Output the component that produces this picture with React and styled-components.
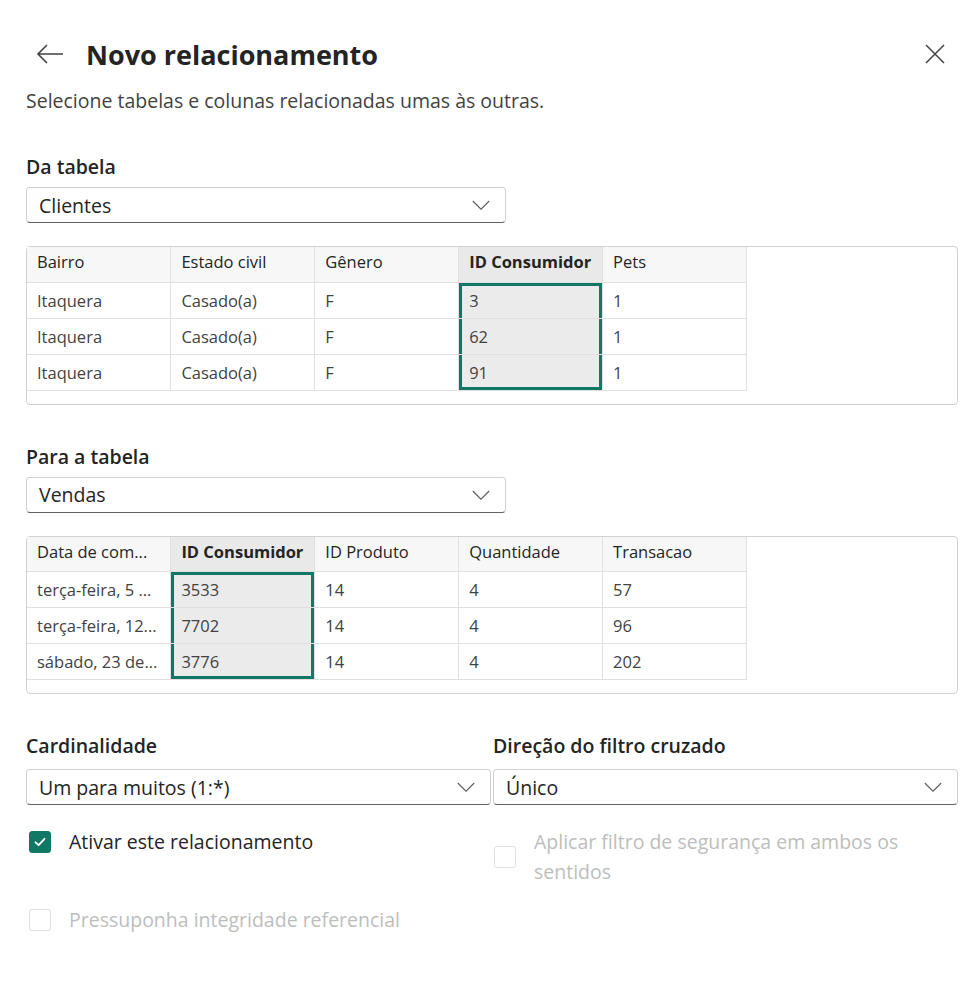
import React from "react"
import styled, { createGlobalStyle } from "styled-components"

const GREEN = "#117865"

const GlobalStyle = createGlobalStyle`
    body {
        margin: 0;
        background: #fff;
        font-family: "Open Sans", "Noto Sans", sans-serif;
        color: #242424;
    }
`

const Page = styled.div`
    width: 932px;
    padding: 32px 21px 40px 26px;
`
const Header = styled.div`
    height: 44px;
    display: flex;
    align-items: center;
`
const IconButton = styled.button`
    border: none;
    background: transparent;
    padding: 0;
    display: flex;
    align-items: center;
    justify-content: center;
    color: #424242;
    margin-left: ${p => p.$ml || "0px"};
    cursor: pointer;
`
const Title = styled.h1`
    margin: 0 0 0 22px;
    font-size: 27px;
    font-weight: 700;
    color: #242424;
    flex: 1;
`
const Subtitle = styled.p`
    margin: 12px 0 0;
    font-size: 19.5px;
    line-height: 26px;
    color: #424242;
`
const Label = styled.div`
    margin-top: ${p => p.$mt || "0px"};
    font-size: 19.5px;
    font-weight: 600;
    line-height: 24px;
    color: #242424;
`
const Select = styled.div`
    box-sizing: border-box;
    width: ${p => p.$width || "100%"};
    height: 36px;
    margin-top: ${p => p.$mt || "8px"};
    border: 1px solid #d1d1d1;
    border-bottom-color: #616161;
    border-radius: 4px;
    padding: 0 15px 0 12px;
    display: flex;
    align-items: center;
    justify-content: space-between;
    font-size: 19.5px;
    color: #242424;
`
const TableBox = styled.div`
    margin-top: 23px;
    border: 1px solid #d1d1d1;
    border-radius: 4px;
    padding-bottom: 13px;
`
const Table = styled.table`
    border-collapse: collapse;
    table-layout: fixed;
    width: 720px;
`
const HeadRow = styled.tr`
    height: 35px;
`
const BodyRow = styled.tr`
    height: 36px;
`
const Th = styled.th`
    text-align: left;
    font-weight: ${p => (p.$selected ? 700 : 400)};
    font-size: 16.5px;
    color: #242424;
    background: ${p => (p.$selected ? "#e9e9e9" : "#f7f7f7")};
    padding: 0 10px 5px;
    border-right: 1px solid #e0e0e0;
    border-bottom: 1px solid #e0e0e0;
    white-space: nowrap;
    overflow: hidden;
`
const Td = styled.td`
    font-size: 16.5px;
    color: #424242;
    padding: 0 10px;
    white-space: nowrap;
    overflow: hidden;
    border-right: 1px solid #e0e0e0;
    border-bottom: 1px solid #e0e0e0;
    background: ${p => (p.$selected ? "#ebebeb" : "#fff")};
    box-shadow: ${p =>
        p.$selected
            ? [
                  `inset 3px 0 0 ${GREEN}`,
                  `inset -3px 0 0 ${GREEN}`,
                  p.$first ? `inset 0 3px 0 ${GREEN}` : null,
                  p.$last ? `inset 0 -3px 0 ${GREEN}` : null,
              ]
                  .filter(Boolean)
                  .join(", ")
            : "none"};
`
const Grid = styled.div`
    margin-top: 40px;
    display: grid;
    grid-template-columns: 465px 465px;
    column-gap: 2px;
    align-items: start;
`
const Option = styled.label`
    display: flex;
    align-items: center;
    gap: 18px;
    margin-top: ${p => p.$mt || "0px"};
    padding-left: ${p => p.$pl || "3px"};
    font-size: 19.5px;
    line-height: 30px;
    color: ${p => (p.$disabled ? "#bdbdbd" : "#242424")};
`
const Box = styled.span`
    box-sizing: border-box;
    flex: none;
    width: 22px;
    height: 22px;
    border-radius: 3px;
    border: 1px solid ${p => (p.$checked ? GREEN : "#e0e0e0")};
    background: ${p => (p.$checked ? GREEN : "#fff")};
    display: flex;
    align-items: center;
    justify-content: center;
`
const OptionText = styled.span`
    max-width: 390px;
`

function Chevron () {
    return (
        <svg width="18" height="10" viewBox="0 0 18 10" fill="none">
            <path d="M0.8 1 L9 9.2 L17.2 1" stroke="#616161" strokeWidth="1.2" />
        </svg>
    )
}

function Dropdown ({ value, width, mt }) {
    return (
        <Select $width={width} $mt={mt}>
            <span>{value}</span>
            <Chevron />
        </Select>
    )
}

function Preview ({ columns, rows, selected }) {
    return (
        <TableBox>
            <Table>
                <thead>
                    <HeadRow>
                        {columns.map((c, i) => (
                            <Th key={c} $selected={i === selected}>{c}</Th>
                        ))}
                    </HeadRow>
                </thead>
                <tbody>
                    {rows.map((r, ri) => (
                        <BodyRow key={ri}>
                            {r.map((v, i) => (
                                <Td
                                    key={i}
                                    $selected={i === selected}
                                    $first={ri === 0}
                                    $last={ri === rows.length - 1}
                                >
                                    {v}
                                </Td>
                            ))}
                        </BodyRow>
                    ))}
                </tbody>
            </Table>
        </TableBox>
    )
}

function Check ({ checked, disabled, children, mt, pl }) {
    return (
        <Option $disabled={disabled} $mt={mt} $pl={pl}>
            <Box $checked={checked}>
                {checked && (
                    <svg width="14" height="14" viewBox="0 0 14 14" fill="none">
                        <path d="M2.5 7.3 L5.6 10.2 L11.5 3.8" stroke="#fff" strokeWidth="1.8" strokeLinecap="round" strokeLinejoin="round" />
                    </svg>
                )}
            </Box>
            <OptionText>{children}</OptionText>
        </Option>
    )
}

const clientes = {
    columns: ["Bairro", "Estado civil", "Gênero", "ID Consumidor", "Pets"],
    selected: 3,
    rows: [
        ["Itaquera", "Casado(a)", "F", "3", "1"],
        ["Itaquera", "Casado(a)", "F", "62", "1"],
        ["Itaquera", "Casado(a)", "F", "91", "1"],
    ],
}

const vendas = {
    columns: ["Data de com...", "ID Consumidor", "ID Produto", "Quantidade", "Transacao"],
    selected: 1,
    rows: [
        ["terça-feira, 5 ...", "3533", "14", "4", "57"],
        ["terça-feira, 12...", "7702", "14", "4", "96"],
        ["sábado, 23 de...", "3776", "14", "4", "202"],
    ],
}

export default function App () {
    return (
        <>
            <GlobalStyle />
            <Page>
                <Header>
                    <IconButton $ml="10px" aria-label="Voltar">
                        <svg width="28" height="22" viewBox="0 0 28 22" fill="none">
                            <path d="M27 11 H2 M11 2 L2 11 L11 20" stroke="#424242" strokeWidth="1.6" strokeLinejoin="miter" />
                        </svg>
                    </IconButton>
                    <Title>Novo relacionamento</Title>
                    <IconButton aria-label="Fechar">
                        <svg width="20" height="20" viewBox="0 0 20 20" fill="none">
                            <path d="M1 1 L19 19 M19 1 L1 19" stroke="#424242" strokeWidth="1.5" />
                        </svg>
                    </IconButton>
                    <span style={{ width: "13px" }} />
                </Header>
                <Subtitle>Selecione tabelas e colunas relacionadas umas às outras.</Subtitle>

                <Label $mt="41px">Da tabela</Label>
                <Dropdown value="Clientes" width="480px" />
                <Preview {...clientes} />

                <Label $mt="40px">Para a tabela</Label>
                <Dropdown value="Vendas" width="480px" />
                <Preview {...vendas} />

                <Grid>
                    <Label>Cardinalidade</Label>
                    <Label>Direção do filtro cruzado</Label>
                    <Dropdown value="Um para muitos (1:*)" mt="11px" />
                    <Dropdown value="Único" mt="11px" />
                    <Check checked mt="22px">Ativar este relacionamento</Check>
                    <Check disabled mt="22px" pl="1px">Aplicar filtro de segurança em ambos os sentidos</Check>
                    <Check disabled mt="18px">Pressuponha integridade referencial</Check>
                </Grid>
            </Page>
        </>
    )
}
